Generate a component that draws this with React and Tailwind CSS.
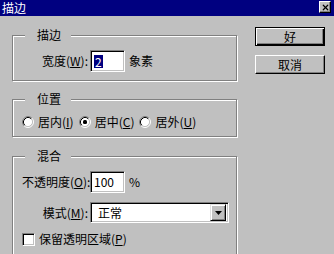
import React from 'react';
import { X } from 'lucide-react';

const Group = ({ label, className, children }) => (
  <div
    className={`relative border border-[#808080] shadow-[inset_1px_1px_0_#fff,1px_1px_0_#fff] ${className}`}
  >
    <span className="absolute left-[12px] top-[-8px] bg-[#c0c0c0] pl-[12px] pr-[10px] leading-[14px]">
      {label}
    </span>
    {children}
  </div>
);

const Radio = ({ checked }) => (
  <svg width="12" height="12" viewBox="0 0 12 12" className="shrink-0">
    <circle cx="6" cy="6" r="4.5" fill="#fff" />
    <path d="M2.11 9.89A5.5 5.5 0 0 1 9.89 2.11" fill="none" stroke="#808080" />
    <path d="M9.89 2.11A5.5 5.5 0 0 1 2.11 9.89" fill="none" stroke="#fff" />
    <path d="M2.82 9.18A4.5 4.5 0 0 1 9.18 2.82" fill="none" stroke="#000" />
    <path d="M9.18 2.82A4.5 4.5 0 0 1 2.82 9.18" fill="none" stroke="#c0c0c0" />
    {checked && <rect x="4" y="4" width="4" height="4" rx="1.5" fill="#000" />}
  </svg>
);

const Field = ({ className, children }) => (
  <div
    className={`flex items-center bg-white border border-t-[#808080] border-l-[#808080] border-b-white border-r-white shadow-[inset_1px_1px_0_#000,inset_-1px_-1px_0_#c0c0c0] ${className}`}
  >
    {children}
  </div>
);

const Label = ({ children }) => (
  <div className="w-[66px] text-right whitespace-nowrap mr-[2px]">{children}</div>
);

export default function App() {
  return (
    <div className="w-[334px] h-[254px] overflow-hidden bg-[#c0c0c0] text-black text-[12px] leading-[14px] font-['Noto_Sans_CJK_SC','Liberation_Sans',sans-serif]">
      {/* title bar */}
      <div className="h-[16px] bg-[#000080] flex items-center justify-between pl-[2px] pr-[3px]">
        <span className="text-white leading-[16px]">描边</span>
        <div className="w-[12px] h-[12px] mb-[2px] bg-[#c0c0c0] border border-t-white border-l-white border-b-black border-r-black shadow-[inset_-1px_-1px_0_#808080] flex items-center justify-center">
          <X size={9} strokeWidth={3.2} color="#000" />
        </div>
      </div>

      <div className="flex items-start pl-[12px]">
        <div className="w-[225px] pt-[19px]">
          <Group label="描边" className="h-[46px] pt-[14px] pl-[9px]">
            <div className="flex items-center h-[22px]">
              <Label>
                宽度(<u>W</u>):
              </Label>
              <Field className="w-[35px] h-[22px] pl-[3px]">
                <span className="bg-[#000080] text-white leading-[13px] px-[1px]">2</span>
              </Field>
              <span className="ml-[4px]">象素</span>
            </div>
          </Group>

          <Group label="位置" className="mt-[18px] h-[38px] pt-[15px] pl-[9px]">
            <div className="flex items-center h-[14px] gap-[5px] whitespace-nowrap">
              <div className="flex items-center gap-[4px]">
                <Radio />
                <span>
                  居内(<u>I</u>)
                </span>
              </div>
              <div className="flex items-center gap-[4px]">
                <Radio checked />
                <span>
                  居中(<u>C</u>)
                </span>
              </div>
              <div className="flex items-center gap-[4px]">
                <Radio />
                <span>
                  居外(<u>U</u>)
                </span>
              </div>
            </div>
          </Group>

          <Group label="混合" className="mt-[19px] h-[110px] pt-[14px] pl-[9px]">
            <div className="flex items-center h-[22px]">
              <Label>
                不透明度(<u>O</u>):
              </Label>
              <Field className="w-[35px] h-[22px] pl-[3px]">
                <span>100</span>
              </Field>
              <span className="ml-[4px]">%</span>
            </div>
            <div className="flex items-center h-[21px] mt-[9px]">
              <Label>
                模式(<u>M</u>):
              </Label>
              <Field className="w-[139px] h-[21px] pl-[7px] pr-[2px] justify-between">
                <span>正常</span>
                <div className="w-[16px] h-[17px] bg-[#c0c0c0] border border-t-[#dfdfdf] border-l-[#dfdfdf] border-b-black border-r-black shadow-[inset_1px_1px_0_#fff,inset_-1px_-1px_0_#808080] flex items-center justify-center">
                  <svg width="7" height="4" viewBox="0 0 7 4">
                    <path d="M0 0H7L3.5 4Z" fill="#000" />
                  </svg>
                </div>
              </Field>
            </div>
            <div className="flex items-center mt-[9px] gap-[4px]">
              <div className="w-[13px] h-[13px] bg-white border border-t-[#808080] border-l-[#808080] border-b-white border-r-white shadow-[inset_1px_1px_0_#000,inset_-1px_-1px_0_#c0c0c0]" />
              <span>
                保留透明区域(<u>P</u>)
              </span>
            </div>
          </Group>
        </div>

        <div className="ml-[18px] pt-[11px] flex flex-col gap-[9px]">
          <button className="w-[70px] h-[19px] bg-[#c0c0c0] border border-black shadow-[inset_1px_1px_0_#fff,inset_-1px_-1px_0_#000,inset_-2px_-2px_0_#808080] leading-[14px]">
            好
          </button>
          <button className="w-[70px] h-[19px] bg-[#c0c0c0] border border-t-white border-l-white border-b-black border-r-black shadow-[inset_-1px_-1px_0_#808080] leading-[14px]">
            取消
          </button>
        </div>
      </div>
    </div>
  );
}
